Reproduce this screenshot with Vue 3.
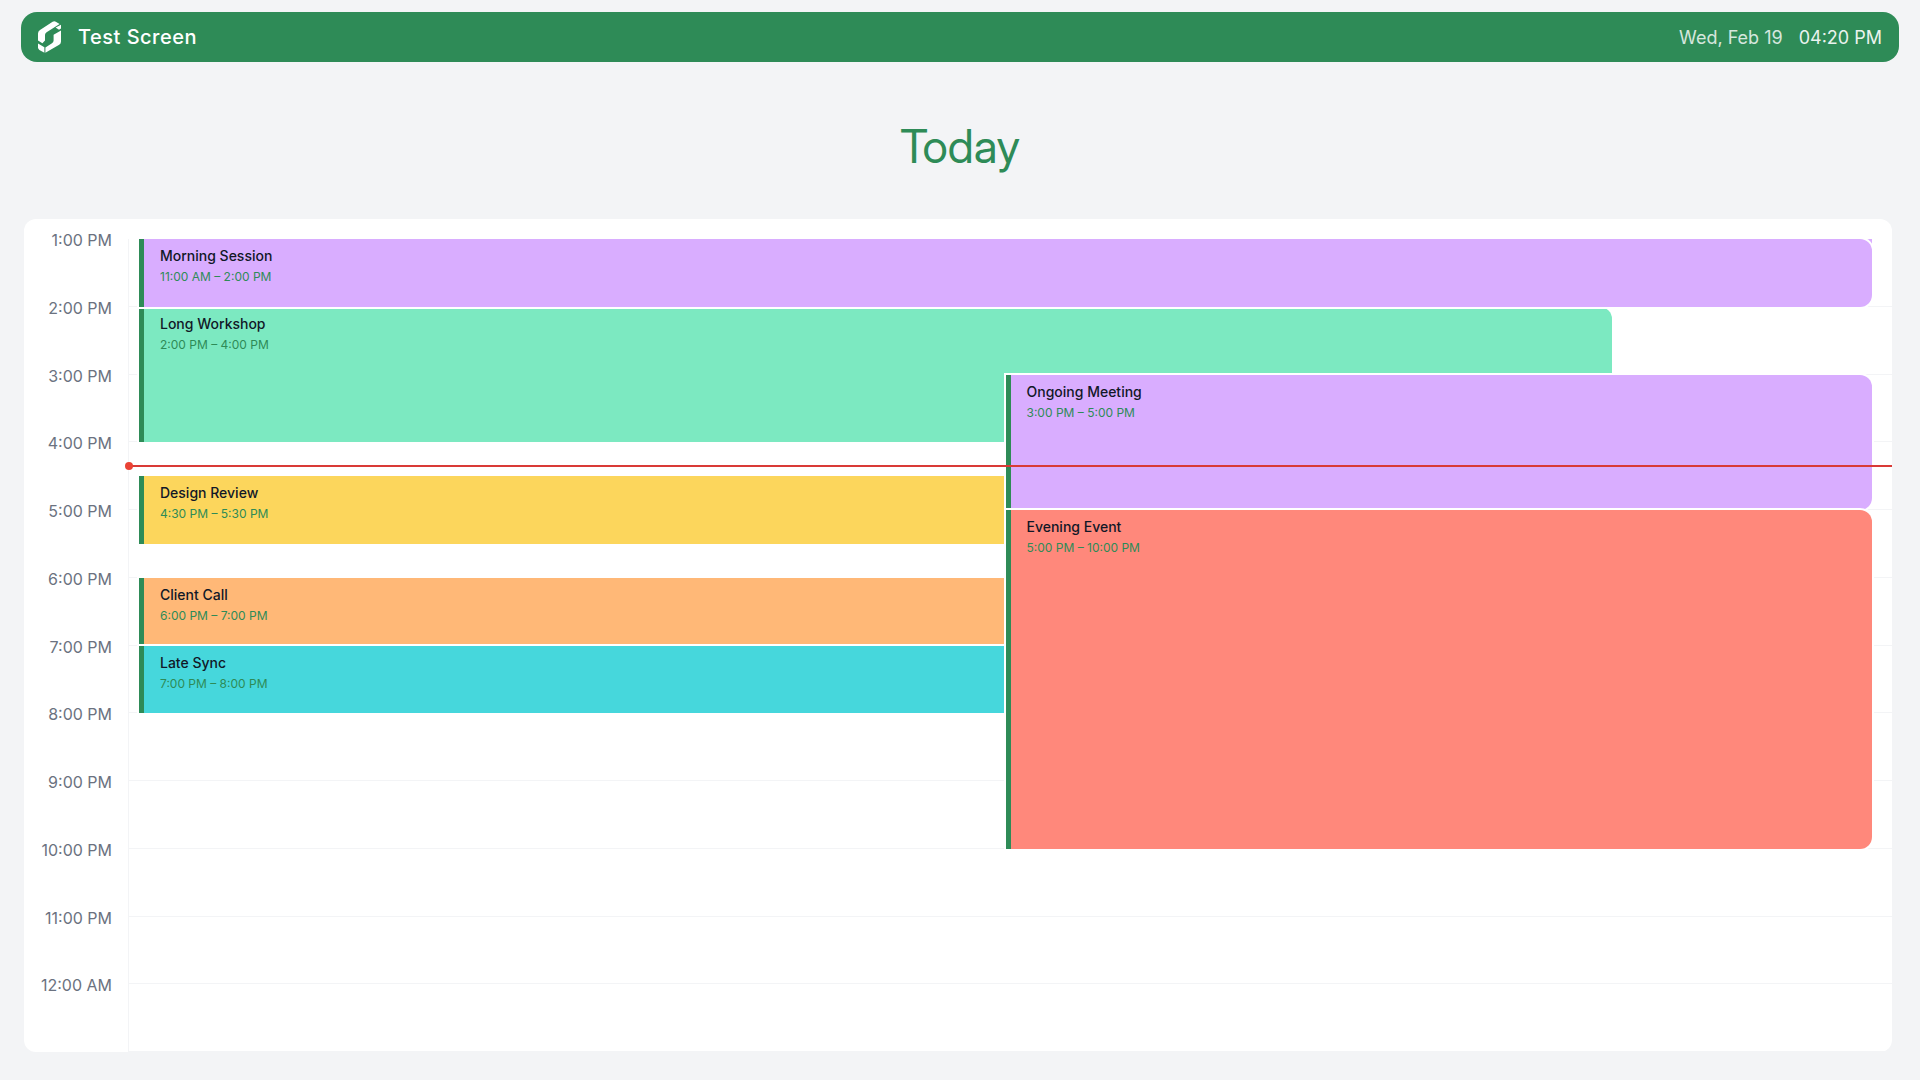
<script setup>
const hours = [
  '1:00 PM', '2:00 PM', '3:00 PM', '4:00 PM', '5:00 PM', '6:00 PM',
  '7:00 PM', '8:00 PM', '9:00 PM', '10:00 PM', '11:00 PM', '12:00 AM',
]

// Rows are half hours counted from 1:00 PM; columns are the three lane lines.
const events = [
  { title: 'Morning Session', time: '11:00 AM – 2:00 PM', tone: 'violet', rows: '1 / 3', cols: '1 / 4', shape: 'slot-continued' },
  { title: 'Long Workshop', time: '2:00 PM – 4:00 PM', tone: 'mint', rows: '3 / 7', cols: '1 / 3', shape: 'slot-under' },
  { title: 'Ongoing Meeting', time: '3:00 PM – 5:00 PM', tone: 'violet', rows: '5 / 9', cols: '2 / 4', shape: 'slot-front' },
  { title: 'Design Review', time: '4:30 PM – 5:30 PM', tone: 'yellow', rows: '8 / 10', cols: '1 / 2', shape: 'slot-half' },
  { title: 'Evening Event', time: '5:00 PM – 10:00 PM', tone: 'coral', rows: '9 / 19', cols: '2 / 4', shape: 'slot-front' },
  { title: 'Client Call', time: '6:00 PM – 7:00 PM', tone: 'orange', rows: '11 / 13', cols: '1 / 2', shape: 'slot-half' },
  { title: 'Late Sync', time: '7:00 PM – 8:00 PM', tone: 'cyan', rows: '13 / 15', cols: '1 / 2', shape: 'slot-half' },
]

const minutesSinceStart = 200
const nowTop = `${(minutesSinceStart / (hours.length * 60)) * 100}%`
</script>

<template>
  <div class="screen">
    <header class="bar">
      <svg class="logo" viewBox="0 0 24 32" aria-hidden="true">
        <path d="M1 19.6 V12.6 Q1 10.2 3 9 L15.6 0.8 Q17.2 -0.2 18.8 0.7 L22.6 3 L9.6 11.2 Q8 12.3 8 14 V19.4 L5.4 22.2 Z" />
        <path d="M18.6 6.6 L24 3.8 V7.6 L22 8.8 Z" />
        <path d="M24 9.6 V20.4 Q24 22.6 22.2 23.7 L8.4 31.8 V26.4 L15 22.2 Q16.6 21.2 16.6 19.4 V13.8 Z" />
        <path d="M1 22.4 L7.4 26.2 V31.8 L2.4 29 Q1 28.1 1 26.6 Z" />
      </svg>
      <span class="name">Test Screen</span>
      <span class="date">Wed, Feb 19</span>
      <time class="clock">04:20 PM</time>
    </header>

    <h1 class="heading">Today</h1>

    <main class="card">
      <div class="labels">
        <div v-for="hour in hours" :key="hour" class="label-row">
          <span class="label">{{ hour }}</span>
        </div>
      </div>
      <div class="timeline">
        <div class="lines">
          <div v-for="hour in hours" :key="hour" class="line"></div>
        </div>
        <div class="events">
          <div
            v-for="event in events"
            :key="event.title"
            class="slot"
            :class="[event.tone, event.shape]"
            :style="{ gridRow: event.rows, gridColumn: event.cols }"
          >
            <article class="event">
              <h2 class="title">{{ event.title }}</h2>
              <p class="time">{{ event.time }}</p>
            </article>
          </div>
        </div>
        <div class="now" :style="{ top: nowTop }"></div>
      </div>
    </main>
  </div>
</template>

<style>
body {
  margin: 0;
  background: #f3f4f6;
}
</style>

<style scoped>
.screen {
  box-sizing: border-box;
  display: flex;
  flex-direction: column;
  min-height: 100vh;
  padding: 12px 21px 28px;
  background: #f3f4f6;
  color: #111827;
  font-family: Inter, "Liberation Sans", sans-serif;
}

.bar {
  display: flex;
  align-items: center;
  box-sizing: border-box;
  height: 50px;
  padding: 0 17px 0 16px;
  border-radius: 16px;
  background: #2e8b57;
  color: #fff;
}

.logo {
  width: 24px;
  height: 32px;
  margin-right: 17px;
  fill: #fff;
}

.name {
  font-size: 20px;
  font-weight: 500;
  letter-spacing: 0.5px;
}

.date {
  margin-left: auto;
  margin-right: 16px;
  font-size: 18px;
  opacity: 0.8;
}

.clock {
  font-size: 18px;
  opacity: 0.9;
}

.heading {
  margin: 56px 0 45px;
  color: #2e8b57;
  font-family: "Inter Display", Inter, "Liberation Sans", sans-serif;
  font-size: 46px;
  font-weight: 400;
  line-height: 56px;
  text-align: center;
}

.card {
  display: flex;
  flex: 1;
  margin: 0 7px 0 3px;
  padding-top: 20px;
  border-radius: 12px;
  background: #fff;
}

.labels,
.lines {
  display: grid;
  grid-template-rows: repeat(12, minmax(48px, 1fr));
}

.labels {
  box-sizing: border-box;
  width: 104px;
  padding-right: 16px;
}

.label {
  display: block;
  margin-top: -11px;
  color: #6b7280;
  font-size: 16px;
  line-height: 24px;
  text-align: right;
}

.timeline {
  position: relative;
  display: grid;
  flex: 1;
  border-left: 1px solid #f3f4f6;
}

.lines,
.events {
  grid-area: 1 / 1;
}

.line {
  border-bottom: 1px solid #f3f4f6;
}

.events {
  display: grid;
  grid-template-rows: repeat(24, minmax(0, 1fr));
  grid-template-columns: 50% 35% 15%;
  margin: 0 20px 0 10px;
  isolation: isolate;
}

.slot {
  display: grid;
  z-index: 1;
}

.event {
  min-height: 0;
  padding: 8px 16px;
  border-left: 5px solid #2e8b57;
  border-radius: 0 12px 12px 0;
  box-shadow: 0 0 0 2px #fff;
}

.slot-half .event {
  border-radius: 0;
}

.slot-under {
  z-index: 0;
}

.slot-front {
  z-index: 2;
}

.slot-continued {
  border-radius: 0 0 12px 0;
  background: #d9adff;
}

.violet .event {
  background: #d9adff;
}

.mint .event {
  background: #7ce9c1;
}

.yellow .event {
  background: #fcd65c;
}

.coral .event {
  background: #ff887b;
}

.orange .event {
  background: #ffb877;
}

.cyan .event {
  background: #46d7dc;
}

.title {
  margin: 0;
  font-size: 14px;
  font-weight: 500;
  line-height: 18px;
}

.time {
  margin: 3px 0 0;
  color: #2e8b57;
  font-size: 12px;
  line-height: 18px;
}

.now {
  position: absolute;
  right: 0;
  left: 0;
  height: 2px;
  background: #d93a36;
  z-index: 3;
}

.now::before {
  content: "";
  position: absolute;
  top: -3px;
  left: -4px;
  width: 8px;
  height: 8px;
  border-radius: 50%;
  background: #ea4335;
}
</style>
